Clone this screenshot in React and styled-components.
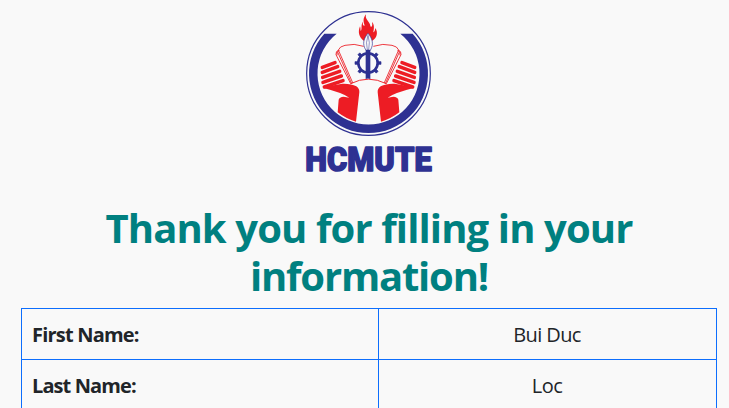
import React from "react";
import styled, { createGlobalStyle } from "styled-components";

const GlobalStyle = createGlobalStyle`
  * { box-sizing: border-box; }
  body {
    margin: 0;
    height: 408px;
    overflow: hidden;
    background: #f9f9f9;
    color: #212529;
    font-family: "Segoe UI", "Open Sans", "Noto Sans", sans-serif;
  }
`;

const Page = styled.main`
  display: flex;
  flex-direction: column;
  padding: 5px 12px 0 21px;
  height: 408px;
  overflow: hidden;
`;

const Logo = styled.svg`
  display: block;
  width: 140px;
  height: 170px;
  margin-left: 279px;
  flex: none;
  overflow: visible;
`;

const Title = styled.h1`
  margin: 29px 0 8px;
  font-size: 40px;
  line-height: 48px;
  font-weight: 700;
  text-align: center;
  color: #008080;
  white-space: nowrap;
`;

const TitleLine = styled.span`
  display: block;
  letter-spacing: ${(p) => p.$spacing};
`;

const InfoTable = styled.dl`
  margin: 0;
  border: 1px solid #0d6efd;
  border-bottom: 0;
  font-size: 20px;
  line-height: 30px;
  flex: none;
`;

const Row = styled.div`
  display: grid;
  grid-template-columns: 356px 1fr;
  border-bottom: 1px solid #0d6efd;
`;

const Label = styled.dt`
  padding: 11px 10px 9px;
  font-weight: 700;
  letter-spacing: ${(p) => p.$spacing};
`;

const Value = styled.dd`
  margin: 0;
  padding: 11px 11px 9px 10px;
  border-left: 1px solid #0d6efd;
  text-align: center;
  letter-spacing: ${(p) => p.$spacing};
`;

const BLUE = "#2e3192";
const RED = "#ed1c24";
const teeth = [0, 45, 90, 135, 180, 225, 270, 315];

function Hand() {
  return (
    <>
      <g stroke={RED} strokeWidth="10.5" strokeLinecap="round">
        <path d="M67 187L105 173M67 202L113 185M68 217L119 199M69 232L124 213M73 246L129 227" />
      </g>
      <path
        fill={RED}
        d="M70 246L127 236Q153 235 169 244Q179 251 178 262L168 350Q139 342 113 322L116 284Q118 276 131 275L148 278Q125 263 73 250Z"
      />
    </>
  );
}

function BookSide() {
  return (
    <path
      d="M191 124Q162 114 135 121Q119 124 115 135L158 233M115 135Q107 140 108 149L152 236L158 233M112 139L154 234M118 136Q108 142 111 151"
      fill="none"
      stroke={RED}
      strokeWidth="2.6"
    />
  );
}

function UniversityLogo() {
  return (
    <Logo viewBox="0 0 420 510" role="img" aria-label="HCMUTE">
      <circle cx="205.5" cy="205.5" r="185.5" fill="none" stroke={BLUE} strokeWidth="3.6" />
      <path
        fill={BLUE}
        d="M73 86A178.5 178.5 0 1 0 338 86H301A153 153 0 1 1 110 86Z"
      />
      <Hand />
      <g transform="translate(411 0) scale(-1 1)">
        <Hand />
      </g>
      <path d="M152 236Q205 209 259 236L300 145L217 124H191L113 145Z" fill="#f9f9f9" />
      <BookSide />
      <g transform="translate(411 0) scale(-1 1)">
        <BookSide />
      </g>
      <path d="M152 236Q205 209 259 236" fill="none" stroke={RED} strokeWidth="2.8" />
      <path
        fill={RED}
        d="M198 28C188 40 190 50 194 62C188 62 188 57 189 50C181 61 188 71 182 78C181 73 182 69 180 64C173 82 177 96 191 107H217C231 99 235 83 226 69C225 77 223 81 220 82C222 72 224 58 216 51C219 64 213 70 211 62C209 48 194 45 198 28Z"
      />
      <path
        d="M204 85C192 99 185 116 198 136H211C223 116 216 99 204 85Z"
        fill="#f9f9f9"
        stroke={BLUE}
        strokeWidth="2"
      />
      <path d="M204 91Q196 113 202 134M204 91Q211 113 206 134" fill="none" stroke={BLUE} strokeWidth="1.5" />
      <path d="M197 135H211V222Q204 219 197 222Z" fill={BLUE} />
      <circle cx="204" cy="174" r="29" fill="none" stroke={BLUE} strokeWidth="8" />
      {teeth.map((angle) => (
        <path
          key={angle}
          d="M200 135H208V145H200Z"
          fill={BLUE}
          stroke={BLUE}
          strokeWidth="2"
          transform={`rotate(${angle} 204 174)`}
        />
      ))}
      <text
        x="16"
        y="499"
        textLength="379"
        lengthAdjust="spacingAndGlyphs"
        fontFamily="Roboto, 'Liberation Sans', sans-serif"
        fontWeight="900"
        fontSize="99"
        fill={BLUE}
        stroke={BLUE}
        strokeWidth="4.5"
        strokeLinejoin="round"
      >
        HCMUTE
      </text>
    </Logo>
  );
}

export default function App() {
  return (
    <>
      <GlobalStyle />
      <Page>
        <UniversityLogo />
        <Title>
          <TitleLine $spacing="-0.88px">Thank you for filling in your</TitleLine>
          <TitleLine $spacing="-1.2px">information!</TitleLine>
        </Title>
        <InfoTable>
          <Row>
            <Label $spacing="-0.8px">First Name:</Label>
            <Value $spacing="-0.6px">Bui Duc</Value>
          </Row>
          <Row>
            <Label $spacing="-0.9px">Last Name:</Label>
            <Value $spacing="-0.5px">Loc</Value>
          </Row>
        </InfoTable>
      </Page>
    </>
  );
}
